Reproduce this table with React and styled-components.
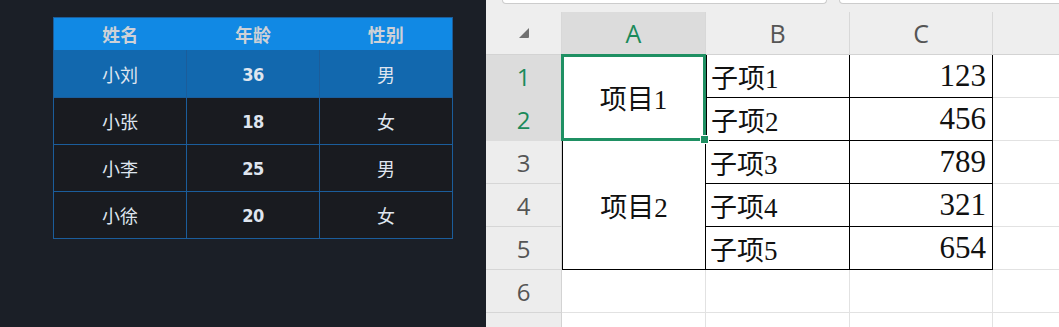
import React from 'react';
import styled, { createGlobalStyle } from 'styled-components';

const people = [
  { name: '小刘', age: 36, sex: '男' },
  { name: '小张', age: 18, sex: '女' },
  { name: '小李', age: 25, sex: '男' },
  { name: '小徐', age: 20, sex: '女' },
];

const subItems = [
  ['子项1', 123],
  ['子项2', 456],
  ['子项3', 789],
  ['子项4', 321],
  ['子项5', 654],
];

const GlobalStyle = createGlobalStyle`
  html, body { margin: 0; padding: 0; background: #1b1f27; }
  body { font-family: "Noto Sans CJK SC", "Noto Sans", sans-serif; }
`;

const Page = styled.div`
  display: flex;
  width: 1059px;
  height: 327px;
  overflow: hidden;
`;

const LeftPanel = styled.div`
  width: 486px;
  flex: none;
  background: #1b1f27;
  padding: 17px 0 0 53px;
  box-sizing: border-box;
`;

const Table = styled.table`
  width: 400px;
  border-collapse: collapse;
  border: 1px solid #1b5d9b;
  table-layout: fixed;
`;

const Th = styled.th`
  height: 32px;
  padding: 0;
  background: #1189e4;
  color: #cdd1d7;
  font-size: 18px;
  font-weight: 700;
  line-height: 1;
`;

const Tr = styled.tr`
  background: ${p => (p.$active ? '#1268ae' : '#191b20')};
`;

const Td = styled.td`
  height: 46px;
  padding: 0;
  border: 1px solid #1b5d9b;
  border-top-color: ${p => (p.$first ? '#1268ae' : '#1b5d9b')};
  text-align: center;
  color: #dfe5ef;
  font-size: 18px;
  font-family: ${p => (p.$num ? '"Liberation Sans Narrow", "DejaVu Sans Condensed", sans-serif' : '"Noto Sans CJK SC", sans-serif')};
  font-weight: ${p => (p.$num ? 700 : 400)};
  letter-spacing: ${p => (p.$num ? '-0.5px' : '0')};
`;

const Sheet = styled.div`
  flex: 1;
  background: #eeeeee;
  display: flex;
  flex-direction: column;
`;

const TabStrip = styled.div`
  height: 12px;
  flex: none;
  display: flex;
  gap: 12px;
  padding-left: 16px;
`;

const Tab = styled.div`
  width: ${p => p.$w}px;
  height: 3px;
  background: #ffffff;
  border: 1px solid #cccccc;
  border-top: none;
  border-radius: 0 0 7px 7px;
`;

const Grid = styled.div`
  display: grid;
  grid-template-columns: 76px 144px 144px 143px 1fr;
  grid-template-rows: repeat(8, 43px);
`;

const ColHead = styled.div`
  background: ${p => (p.$sel ? '#dcdcdc' : '#eeeeee')};
  border-right: 1px solid #d8d8d8;
  border-bottom: 1px solid #d3d3d3;
  display: flex;
  align-items: center;
  justify-content: center;
  font-family: "Open Sans", "Noto Sans", sans-serif;
  font-size: 25px;
  color: ${p => (p.$sel ? '#1a8a5a' : '#555555')};
`;

const Corner = styled(ColHead)`
  background: #eeeeee;
`;

const RowHead = styled.div`
  background: ${p => (p.$sel ? '#dcdcdc' : '#ededed')};
  border-right: 1px solid #d3d3d3;
  border-bottom: 1px solid ${p => (p.$sel ? '#dcdcdc' : '#d6d6d6')};
  display: flex;
  align-items: center;
  justify-content: center;
  font-family: "Open Sans", "Noto Sans", sans-serif;
  font-size: 24px;
  color: ${p => (p.$sel ? '#1a8a5a' : '#555555')};
  grid-column: 1;
`;

const Cell = styled.div`
  background: #ffffff;
  border-right: 1px solid ${p => (p.$ink ? '#000000' : '#e2e2e2')};
  border-bottom: 1px solid ${p => (p.$ink ? '#000000' : '#e2e2e2')};
  display: flex;
  align-items: center;
  justify-content: ${p => p.$align || 'flex-start'};
  padding: 0 ${p => (p.$align === 'flex-end' ? '6px' : '4px')};
  box-sizing: border-box;
  font-family: "Liberation Serif", "Noto Sans CJK SC", serif;
  font-size: ${p => (p.$align === 'flex-end' ? '31px' : '27px')};
  color: #111111;
  white-space: nowrap;
`;

const Merged = styled(Cell)`
  grid-column: 2;
  grid-row: ${p => p.$rows};
  justify-content: center;
  border-left: 1px solid ${p => (p.$ink ? '#000000' : 'transparent')};
`;

const Selected = styled(Merged)`
  position: relative;
  border: 3px solid #1f9063;
  margin: -1px 0 0 -1px;
  &::after {
    content: '';
    position: absolute;
    right: -6px;
    bottom: -6px;
    width: 7px;
    height: 7px;
    background: #1f9063;
    border: 1px solid #ffffff;
  }
`;

function CornerMark() {
  return (
    <svg width="12" height="12" viewBox="0 0 12 12">
      <path d="M11 1 L11 10 Q11 11 10 11 L1 11 Z" fill="#707070" />
    </svg>
  );
}

export default function App() {
  return (
    <Page>
      <GlobalStyle />
      <LeftPanel>
        <Table>
          <thead>
            <tr>
              <Th>姓名</Th>
              <Th>年龄</Th>
              <Th>性别</Th>
            </tr>
          </thead>
          <tbody>
            {people.map((p, i) => (
              <Tr key={p.name} $active={i === 0}>
                <Td $first={i === 0}>{p.name}</Td>
                <Td $first={i === 0} $num>{p.age}</Td>
                <Td $first={i === 0}>{p.sex}</Td>
              </Tr>
            ))}
          </tbody>
        </Table>
      </LeftPanel>

      <Sheet>
        <TabStrip>
          <Tab $w={323} />
          <Tab $w={260} />
        </TabStrip>
        <Grid>
          <Corner><CornerMark /></Corner>
          <ColHead $sel>A</ColHead>
          <ColHead>B</ColHead>
          <ColHead>C</ColHead>
          <ColHead />

          {[1, 2, 3, 4, 5, 6, 7].map(n => (
            <RowHead key={n} $sel={n <= 2} style={{ gridRow: n + 1 }}>{n}</RowHead>
          ))}

          <Selected $rows="2 / span 2">项目1</Selected>
          <Merged $rows="4 / span 3" $ink>项目2</Merged>

          {subItems.map(([label, value], i) => (
            <React.Fragment key={label}>
              <Cell $ink style={{ gridRow: i + 2, gridColumn: 3, borderLeft: i < 2 ? '1px solid #000' : 'none' }}>{label}</Cell>
              <Cell $ink $align="flex-end" style={{ gridRow: i + 2, gridColumn: 4 }}>{value}</Cell>
              <Cell style={{ gridRow: i + 2, gridColumn: 5 }} />
            </React.Fragment>
          ))}

          {[7, 8].map(r => (
            <React.Fragment key={r}>
              <Cell style={{ gridRow: r, gridColumn: 2 }} />
              <Cell style={{ gridRow: r, gridColumn: 3 }} />
              <Cell style={{ gridRow: r, gridColumn: 4 }} />
              <Cell style={{ gridRow: r, gridColumn: 5 }} />
            </React.Fragment>
          ))}
        </Grid>
      </Sheet>
    </Page>
  );
}
